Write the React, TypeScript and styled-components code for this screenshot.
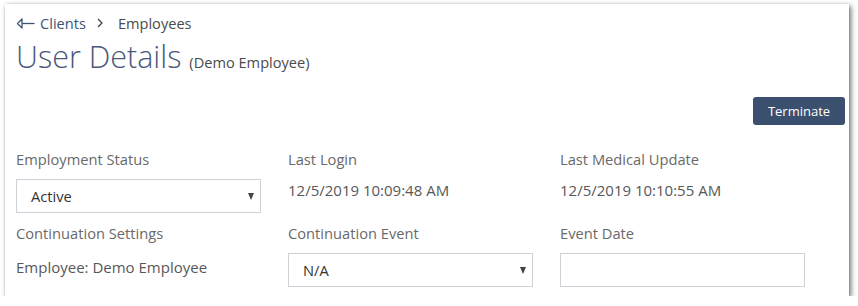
import React from "react";
import styled, { createGlobalStyle } from "styled-components";

const Global = createGlobalStyle`
  html, body { margin: 0; padding: 0; background: #ffffff; }
  body { font-family: "Open Sans", "Noto Sans", sans-serif; }
  * { box-sizing: border-box; }
`;

const Card = styled.div`
  margin: 4px 0 0 5px;
  width: 844px;
  height: 292px;
  background: #fff;
  box-shadow: 2px 2px 5px rgba(0, 0, 0, 0.55), 0 0 2px rgba(0, 0, 0, 0.12);
  padding: 9px 4px 0 11px;
  display: flex;
  flex-direction: column;
`;

const Breadcrumb = styled.nav`
  display: flex;
  align-items: center;
  height: 20px;
  font-size: 14.6px;
  line-height: 20px;
`;

const BackLink = styled.a`
  display: flex;
  align-items: center;
  gap: 5px;
  color: #3d5476;
  text-decoration: none;
  svg { display: block; }
`;

const Sep = styled.span`
  display: flex;
  align-items: center;
  margin: 0 15px 0 11px;
  svg { display: block; }
`;

const Crumb = styled.span`
  color: #4a4a4a;
`;

const TitleRow = styled.div`
  display: flex;
  align-items: baseline;
  margin-top: 5px;
  height: 36px;
`;

const Title = styled.h1`
  margin: 0;
  font-weight: 300;
  font-size: 30.5px;
  line-height: 36px;
  color: #48597a;
`;

const SubTitle = styled.span`
  margin-left: 8px;
  font-size: 14.6px;
  color: #4a4a4a;
`;

const ActionRow = styled.div`
  display: flex;
  justify-content: flex-end;
  margin-top: 23px;
`;

const Button = styled.button`
  width: 92px;
  height: 28px;
  border: none;
  border-radius: 3px;
  background: #3b4f6f;
  color: #fff;
  font-family: inherit;
  font-size: 13px;
  padding: 0;
`;

const Grid = styled.div`
  display: grid;
  grid-template-columns: repeat(3, 272px);
  row-gap: 10px;
  margin-top: 24px;
`;

const Cell = styled.div`
  display: flex;
  flex-direction: column;
`;

const Label = styled.div`
  font-size: 14.7px;
  line-height: 20px;
  color: #6a6a6a;
`;

const Value = styled.div<{ $offset: number }>`
  margin-top: ${(p) => p.$offset}px;
  font-size: 15px;
  line-height: 20px;
  color: #585858;
`;

const SelectBox = styled.div`
  margin-top: 10px;
  width: 245px;
  height: 34px;
  border: 1px solid #cdd2d8;
  display: flex;
  align-items: center;
  justify-content: space-between;
  padding: 0 6px 0 14px;
  font-size: 14.7px;
  color: #333;
`;

const Caret = styled.span`
  width: 0;
  height: 0;
  border-left: 3.5px solid transparent;
  border-right: 3.5px solid transparent;
  border-top: 7px solid #444;
  margin-top: 1px;
`;

const TextInput = styled.input`
  margin-top: 10px;
  width: 245px;
  height: 34px;
  border: 1px solid #cdd2d8;
  border-radius: 0;
  padding: 0 10px;
  font-family: inherit;
  font-size: 14px;
  outline: none;
`;

const BackArrow = () => (
  <svg width="19" height="11" viewBox="0 0 19 11" fill="none">
    <path d="M6 1 L1.5 5.5 L6 10 Z" stroke="#3d5476" strokeWidth="1.3" strokeLinejoin="round" />
    <path d="M6 5.5 H18.5" stroke="#3d5476" strokeWidth="1.3" />
  </svg>
);

const Chevron = () => (
  <svg width="6" height="10" viewBox="0 0 6 10" fill="none">
    <path d="M1 1 L5 5 L1 9" stroke="#444" strokeWidth="1.3" />
  </svg>
);

export default function App() {
  return (
    <>
      <Global />
      <Card>
        <Breadcrumb>
          <BackLink href="#">
            <BackArrow />
            Clients
          </BackLink>
          <Sep>
            <Chevron />
          </Sep>
          <Crumb>Employees</Crumb>
        </Breadcrumb>
        <TitleRow>
          <Title>User Details</Title>
          <SubTitle>(Demo Employee)</SubTitle>
        </TitleRow>
        <ActionRow>
          <Button>Terminate</Button>
        </ActionRow>
        <Grid>
          <Cell>
            <Label>Employment Status</Label>
            <SelectBox>
              <span>Active</span>
              <Caret />
            </SelectBox>
          </Cell>
          <Cell>
            <Label>Last Login</Label>
            <Value $offset={11}>12/5/2019 10:09:48 AM</Value>
          </Cell>
          <Cell>
            <Label>Last Medical Update</Label>
            <Value $offset={11}>12/5/2019 10:10:55 AM</Value>
          </Cell>
          <Cell>
            <Label>Continuation Settings</Label>
            <Value $offset={14}>Employee: Demo Employee</Value>
          </Cell>
          <Cell>
            <Label>Continuation Event</Label>
            <SelectBox>
              <span>N/A</span>
              <Caret />
            </SelectBox>
          </Cell>
          <Cell>
            <Label>Event Date</Label>
            <TextInput type="text" />
          </Cell>
        </Grid>
      </Card>
    </>
  );
}
